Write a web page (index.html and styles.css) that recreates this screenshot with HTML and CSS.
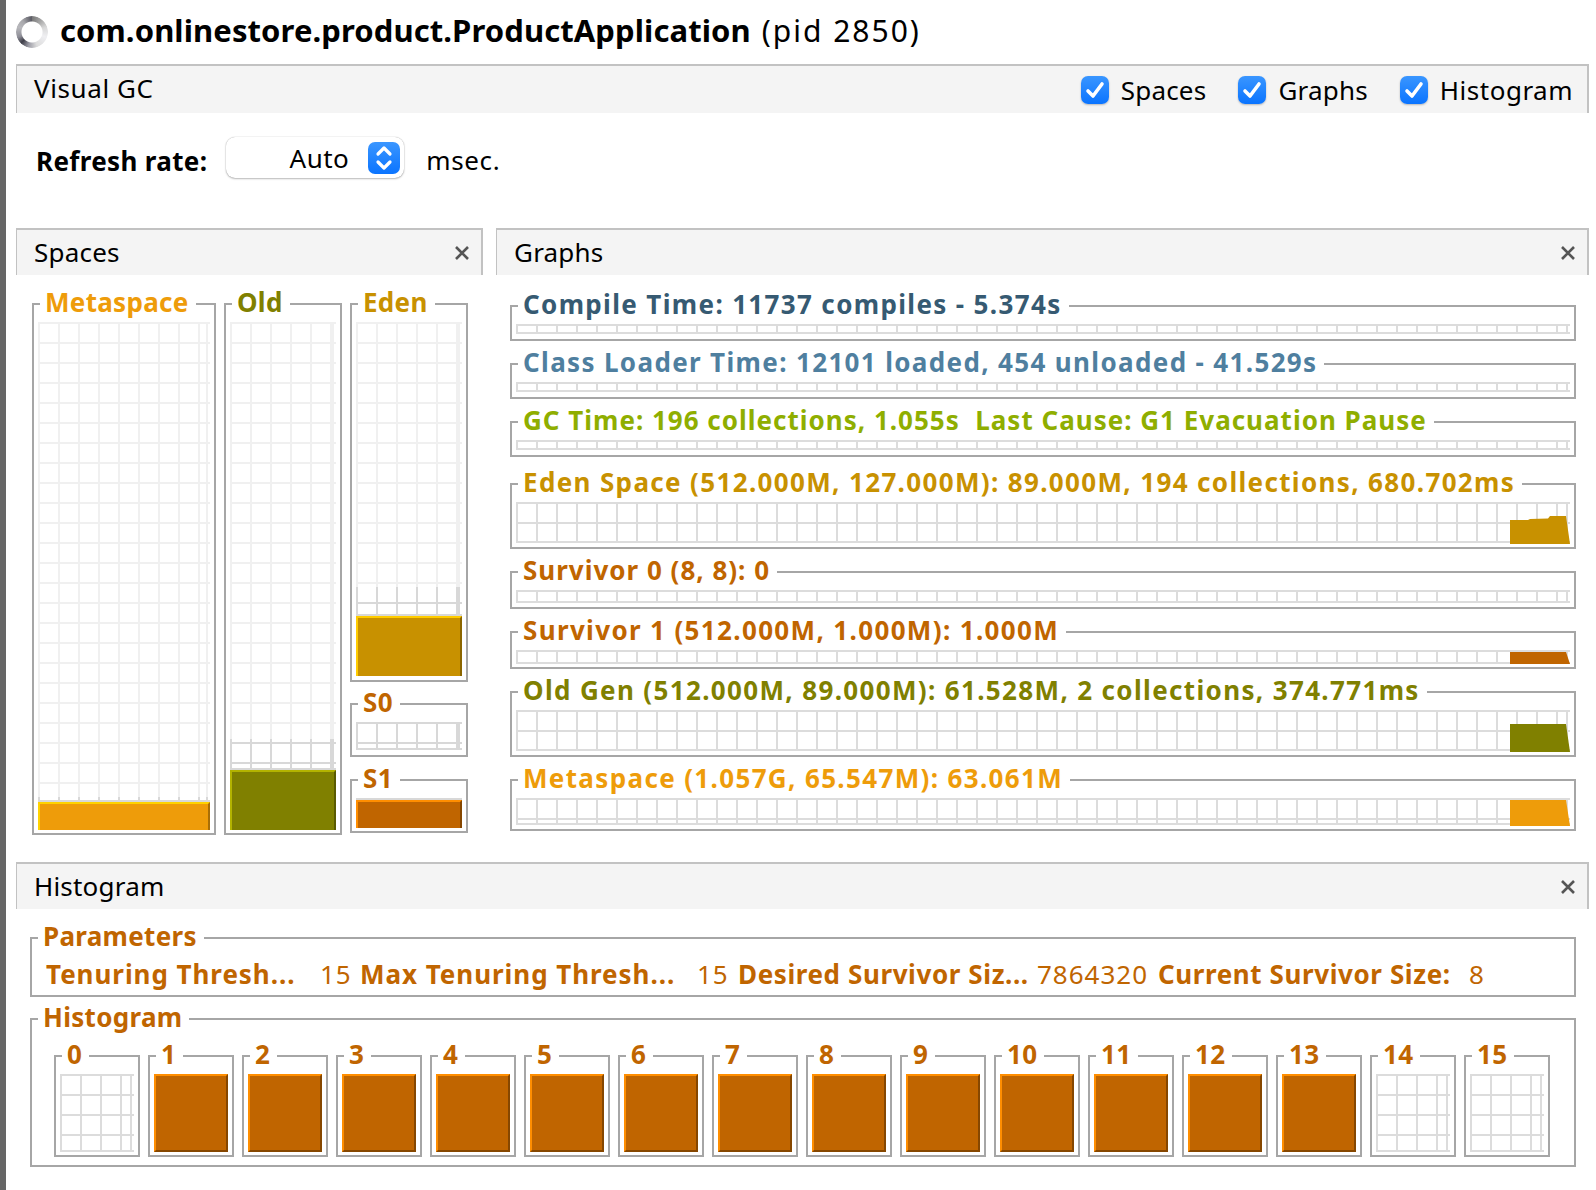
FILE: index.html
```html
<!DOCTYPE html>
<html lang="en">
<head>
    <meta charset="UTF-8">
    <title>Visual GC</title>
    <link rel="stylesheet" href="styles.css">
</head>
<body>
<div class="page">
    <div class="app-title">
        <span class="spinner"></span>
        <span class="app-name">com.onlinestore.product.ProductApplication</span>
        <span class="app-pid">(pid 2850)</span>
    </div>

    <div class="panel-head main-head">
        <span class="panel-title">Visual GC</span>
        <div class="toggles">
            <label class="toggle"><svg class="check" viewBox="0 0 28 28"><path d="M7 15l5 5 9-12" /></svg>Spaces</label>
            <label class="toggle"><svg class="check" viewBox="0 0 28 28"><path d="M7 15l5 5 9-12" /></svg>Graphs</label>
            <label class="toggle toggle-wide"><svg class="check" viewBox="0 0 28 28"><path d="M7 15l5 5 9-12" /></svg>Histogram</label>
        </div>
    </div>

    <div class="refresh">
        <b class="refresh-label">Refresh rate:</b>
        <div class="select">
            <span class="select-value">Auto</span>
            <svg class="stepper" viewBox="0 0 32 32"><path d="M10 12l6-6 6 6M10 20l6 6 6-6" /></svg>
        </div>
        <span class="refresh-unit">msec.</span>
    </div>

    <div class="middle">
        <section class="spaces">
            <div class="panel-head">
                <span class="panel-title">Spaces</span>
                <svg class="close" viewBox="0 0 14 14"><path d="M1 1l12 12M13 1L1 13" /></svg>
            </div>
            <div class="spaces-body">
                <fieldset class="box c-meta col-meta">
                    <legend>Metaspace</legend>
                    <div class="gauge gauge-full">
                        <div class="committed committed-meta"></div>
                        <div class="bar bar-meta"></div>
                    </div>
                </fieldset>
                <fieldset class="box c-old col-old">
                    <legend>Old</legend>
                    <div class="gauge gauge-full">
                        <div class="committed committed-old"></div>
                        <div class="bar bar-old"></div>
                    </div>
                </fieldset>
                <div class="col-young">
                    <fieldset class="box c-eden eden">
                        <legend>Eden</legend>
                        <div class="gauge gauge-eden">
                            <div class="committed committed-eden"></div>
                            <div class="bar bar-eden"></div>
                        </div>
                    </fieldset>
                    <fieldset class="box c-surv surv">
                        <legend>S0</legend>
                        <div class="gauge gauge-s0"></div>
                    </fieldset>
                    <fieldset class="box c-surv surv s1">
                        <legend>S1</legend>
                        <div class="gauge gauge-s1">
                            <div class="bar bar-s1"></div>
                        </div>
                    </fieldset>
                </div>
            </div>
        </section>

        <section class="graphs">
            <div class="panel-head">
                <span class="panel-title">Graphs</span>
                <svg class="close" viewBox="0 0 14 14"><path d="M1 1l12 12M13 1L1 13" /></svg>
            </div>
            <div class="graphs-body">
                <fieldset class="box c-compile row-thin">
                    <legend>Compile Time: 11737 compiles - 5.374s</legend>
                    <div class="chart chart-thin"></div>
                </fieldset>
                <fieldset class="box c-loader row-thin">
                    <legend>Class Loader Time: 12101 loaded, 454 unloaded - 41.529s</legend>
                    <div class="chart chart-thin"></div>
                </fieldset>
                <fieldset class="box c-gc row-thin loose">
                    <legend>GC Time: 196 collections, 1.055s&nbsp; Last Cause: G1 Evacuation Pause</legend>
                    <div class="chart chart-thin"></div>
                </fieldset>
                <fieldset class="box c-eden row-tall row-eden">
                    <legend>Eden Space (512.000M, 127.000M): 89.000M, 194 collections, 680.702ms</legend>
                    <div class="chart chart-tall">
                        <svg class="trace trace-eden" viewBox="0 0 60 28" preserveAspectRatio="none"><polygon points="0,4 18,4 20,3 38,2.5 40,0 56,0 60,28 0,28" /></svg>
                    </div>
                </fieldset>
                <fieldset class="box c-surv row-surv loose">
                    <legend>Survivor 0 (8, 8): 0</legend>
                    <div class="chart chart-s0"></div>
                </fieldset>
                <fieldset class="box c-surv row-surv">
                    <legend>Survivor 1 (512.000M, 1.000M): 1.000M</legend>
                    <div class="chart chart-s1">
                        <svg class="trace trace-s1" viewBox="0 0 60 12" preserveAspectRatio="none"><polygon points="0,0 56,0 60,12 0,12" /></svg>
                    </div>
                </fieldset>
                <fieldset class="box c-old row-tall">
                    <legend>Old Gen (512.000M, 89.000M): 61.528M, 2 collections, 374.771ms</legend>
                    <div class="chart chart-tall">
                        <svg class="trace trace-old" viewBox="0 0 60 28" preserveAspectRatio="none"><polygon points="0,0 56,0 60,28 0,28" /></svg>
                    </div>
                </fieldset>
                <fieldset class="box c-meta row-meta">
                    <legend>Metaspace (1.057G, 65.547M): 63.061M</legend>
                    <div class="chart chart-meta">
                        <svg class="trace trace-meta" viewBox="0 0 60 26" preserveAspectRatio="none"><polygon points="0,0 56,0 60,26 0,26" /></svg>
                    </div>
                </fieldset>
            </div>
        </section>
    </div>

    <section class="histogram">
        <div class="panel-head">
            <span class="panel-title">Histogram</span>
            <svg class="close" viewBox="0 0 14 14"><path d="M1 1l12 12M13 1L1 13" /></svg>
        </div>
        <div class="histogram-body">
            <fieldset class="box c-surv params">
                <legend>Parameters</legend>
                <div class="param-row">
                    <b class="wide">Tenuring Thresh...</b><span>15</span>
                    <b class="wide">Max Tenuring Thresh...</b><span>15</span>
                    <b>Desired Survivor Siz...</b><span>7864320</span>
                    <b>Current Survivor Size:</b><span>8</span>
                </div>
            </fieldset>
            <fieldset class="box c-surv ages">
                <legend>Histogram</legend>
                <div class="age-row">
                    <fieldset class="box c-surv age"><legend>0</legend><div class="age-grid"></div></fieldset>
                    <fieldset class="box c-surv age"><legend>1</legend><div class="age-fill"></div></fieldset>
                    <fieldset class="box c-surv age"><legend>2</legend><div class="age-fill"></div></fieldset>
                    <fieldset class="box c-surv age"><legend>3</legend><div class="age-fill"></div></fieldset>
                    <fieldset class="box c-surv age"><legend>4</legend><div class="age-fill"></div></fieldset>
                    <fieldset class="box c-surv age"><legend>5</legend><div class="age-fill"></div></fieldset>
                    <fieldset class="box c-surv age"><legend>6</legend><div class="age-fill"></div></fieldset>
                    <fieldset class="box c-surv age"><legend>7</legend><div class="age-fill"></div></fieldset>
                    <fieldset class="box c-surv age"><legend>8</legend><div class="age-fill"></div></fieldset>
                    <fieldset class="box c-surv age"><legend>9</legend><div class="age-fill"></div></fieldset>
                    <fieldset class="box c-surv age"><legend>10</legend><div class="age-fill"></div></fieldset>
                    <fieldset class="box c-surv age"><legend>11</legend><div class="age-fill"></div></fieldset>
                    <fieldset class="box c-surv age"><legend>12</legend><div class="age-fill"></div></fieldset>
                    <fieldset class="box c-surv age"><legend>13</legend><div class="age-fill"></div></fieldset>
                    <fieldset class="box c-surv age"><legend>14</legend><div class="age-grid"></div></fieldset>
                    <fieldset class="box c-surv age"><legend>15</legend><div class="age-grid"></div></fieldset>
                </div>
            </fieldset>
        </div>
    </section>
</div>
</body>
</html>
```

FILE: styles.css
```css
body {
    margin: 0;
    background: #fff;
    color: #000;
    font-family: "Noto Sans", "DejaVu Sans", sans-serif;
    font-size: 26px;
}

.page {
    height: 1190px;
    box-sizing: border-box;
    border-left: 6px solid #666;
    padding: 0 7px 0 10px;
    overflow: hidden;
}

/* title line */
.app-title {
    height: 64px;
    box-sizing: border-box;
    padding-bottom: 4px;
    display: flex;
    align-items: center;
    white-space: nowrap;
}
.spinner {
    width: 32px;
    height: 32px;
    margin: 4px 12px 0 0;
    border-radius: 50%;
    background: conic-gradient(#777 0deg, #aaa 40deg, #d8d8d8 70deg, #efeff2 110deg, #dcdcdc 160deg, #9a9aa4 195deg, #3f3f4a 225deg, #8f8f98 250deg, #b8b8bc 290deg, #a8a8ac 320deg, #5f5f68 355deg);
    -webkit-mask: radial-gradient(circle, transparent 10px, #000 11px);
    mask: radial-gradient(circle, transparent 10px, #000 11px);
    filter: blur(0.4px);
}
.app-name {
    font-size: 31px;
    font-weight: 700;
    letter-spacing: 0.09px;
}
.app-pid {
    margin-left: 11px;
    font-size: 30px;
    letter-spacing: 2px;
}

/* panel headers */
.panel-head {
    display: flex;
    align-items: center;
    justify-content: space-between;
    height: 47px;
    box-sizing: border-box;
    background: #f4f4f4;
    border-top: 2px solid #c2c2c2;
    border-left: 1px solid #c2c2c2;
    border-right: 2px solid #c2c2c2;
    padding: 0 12px 0 17px;
}
.main-head {
    height: 49px;
    padding-right: 14px;
}
.panel-title {
    margin-bottom: 2px;
    letter-spacing: 0.2px;
}
.main-head .panel-title {
    margin-bottom: 4px;
    letter-spacing: 0.6px;
}
.close {
    width: 14px;
    height: 14px;
}
.close path {
    fill: none;
    stroke: #555;
    stroke-width: 2.6;
}

.toggles {
    display: flex;
    gap: 32px;
}
.toggle {
    display: flex;
    align-items: center;
    gap: 12px;
    letter-spacing: 0.2px;
}
.toggle-wide {
    letter-spacing: 0.5px;
}
.check {
    width: 28px;
    height: 28px;
    border-radius: 7px;
    background: linear-gradient(#3a96ff, #0a74ff);
    box-shadow: 0 1px 2px rgba(0, 0, 0, 0.25);
}
.check path {
    fill: none;
    stroke: #fff;
    stroke-width: 3.6;
    stroke-linecap: round;
    stroke-linejoin: round;
}

/* refresh rate */
.refresh {
    height: 115px;
    box-sizing: border-box;
    padding: 24px 0 0 20px;
    display: flex;
    align-items: flex-start;
}
.refresh-label {
    margin: 6px 19px 0 0;
    letter-spacing: 0.35px;
}
.select {
    width: 178px;
    height: 41px;
    box-sizing: border-box;
    display: flex;
    align-items: center;
    justify-content: flex-end;
    padding-right: 4px;
    background: #fff;
    border-radius: 9px;
    box-shadow: 0 0 1px rgba(0, 0, 0, 0.35), 0 1px 2px rgba(0, 0, 0, 0.25);
}
.select-value {
    margin-right: 19px;
    letter-spacing: 0.5px;
}
.stepper {
    width: 32px;
    height: 32px;
    border-radius: 7px;
    background: linear-gradient(#3a96ff, #0a74ff);
}
.stepper path {
    fill: none;
    stroke: #fff;
    stroke-width: 3.2;
    stroke-linecap: round;
    stroke-linejoin: round;
}
.refresh-unit {
    margin: 5px 0 0 22px;
    letter-spacing: 0.6px;
}

.middle {
    display: flex;
    gap: 13px;
    height: 634px;
}
.spaces {
    width: 467px;
}
.graphs {
    flex: 1;
}

/* titled boxes */
.box {
    margin: 0;
    padding: 6px 4px 3px;
    min-width: 0;
    box-sizing: border-box;
    border: 2px solid #a6a6a6;
}
.box legend {
    margin-left: 2px;
    padding: 0 7px 0 5px;
    height: 24px;
    line-height: 20px;
    font-weight: 700;
    white-space: nowrap;
    color: var(--tone);
    letter-spacing: 0.3px;
}
.c-meta { --tone: #ee9c0a; }
.c-old { --tone: #808000; }
.c-eden { --tone: #c89100; }
.c-surv { --tone: #c06500; }
.c-compile { --tone: #365a72; }
.c-loader { --tone: #4f7f9f; }
.c-gc { --tone: #8fae00; }

/* grid lines, shared by gauges and charts */
.gauge,
.committed,
.chart,
.age-grid {
    --line: #dcdcdc;
    --grid-y: 0px;
    background-image:
        linear-gradient(to right, var(--line) 2px, transparent 2px),
        linear-gradient(to bottom, var(--line) 2px, transparent 2px),
        linear-gradient(var(--line), var(--line)),
        linear-gradient(var(--line), var(--line));
    background-size: 20px 20px, 20px 20px, 2px 100%, 100% 2px;
    background-position: 0 0, 0 var(--grid-y), right 2px top, left bottom;
    background-repeat: repeat, repeat, no-repeat, no-repeat;
}

/* spaces */
.spaces-body {
    display: flex;
    gap: 8px;
    padding: 17px 0 0 16px;
}
.col-meta {
    width: 184px;
    height: 543px;
}
.col-old {
    width: 118px;
    height: 543px;
}
.col-young {
    width: 118px;
    display: flex;
    flex-direction: column;
}
.eden {
    height: 390px;
}
.surv {
    height: 65px;
    margin-top: 10px;
}
.s1 {
    margin-top: 11px;
}
.gauge {
    --line: #f0f0f0;
    display: flex;
    flex-direction: column;
    justify-content: flex-end;
}
.gauge-full { height: 508px; }
.gauge-eden { height: 354px; }
.gauge-s0 { height: 28px; --line: #d8d8d8; }
.gauge-s1 { height: 30px; --line: #d8d8d8; }
.committed {
    --line: #d8d8d8;
    flex: none;
}
.committed-meta { height: 5px; --grid-y: 5px; }
.committed-old { height: 31px; --grid-y: 3px; }
.committed-eden { height: 29px; --grid-y: 15px; }

.bar {
    box-sizing: border-box;
    flex: none;
    border-style: solid;
    border-width: 2px 2px 0 2px;
}
.bar-meta {
    height: 28px;
    background: #ee9c0a;
    border-color: #ffd200 #a86e06 #ee9c0a #ffd200;
}
.bar-old {
    height: 60px;
    background: #808000;
    border-color: #b3b300 #5a5a00 #808000 #b3b300;
}
.bar-eden {
    height: 60px;
    background: #c89100;
    border-color: #ffcc00 #8c6600 #c89100 #ffcc00;
}
.bar-s1 {
    height: 28px;
    background: #c06500;
    border-color: #ff8e00 #864700 #c06500 #ff8e00;
}

/* graphs */
.graphs-body {
    display: flex;
    flex-direction: column;
    gap: 11px;
    padding: 19px 13px 0 14px;
}
.graphs-body legend {
    letter-spacing: 1.35px;
}
.graphs-body .loose legend {
    letter-spacing: 1px;
}
.row-thin { height: 47px; }
.row-tall { height: 77px; }
.row-eden { margin-top: 4px; }
.row-surv { height: 49px; }
.row-meta { height: 63px; }

.chart {
    display: flex;
    align-items: flex-end;
    justify-content: flex-end;
}
.chart-thin { height: 10px; }
.chart-tall { height: 41px; }
.chart-s0 { height: 13px; }
.chart-s1 { height: 14px; }
.chart-meta { height: 27px; }

.trace {
    width: 60px;
    display: block;
    margin-bottom: -1px;
}
.trace-eden { height: 28px; fill: #c89100; }
.trace-old { height: 28px; fill: #808000; }
.trace-s1 { height: 12px; fill: #c06500; margin-bottom: 0; }
.trace-meta { height: 26px; fill: #ee9c0a; }

/* histogram */
.histogram-body {
    display: flex;
    flex-direction: column;
    gap: 10px;
    padding: 17px 13px 0 14px;
}
.params {
    height: 71px;
}
.param-row {
    display: grid;
    grid-template-columns: 274px 40px 337px 41px 299px 121px 311px auto;
    padding: 0 0 0 10px;
    line-height: 36px;
    white-space: nowrap;
    color: #c06500;
    letter-spacing: 0.6px;
}
.param-row span {
    font-weight: 400;
    letter-spacing: 1px;
}
.param-row .wide {
    letter-spacing: 0.95px;
}
.ages {
    height: 160px;
}
.age-row {
    display: flex;
    gap: 8px;
    padding: 7px 0 0 18px;
}
.age {
    width: 86px;
    height: 113px;
    flex: none;
}
.age-grid {
    height: 78px;
}
.age-fill {
    height: 78px;
    box-sizing: border-box;
    background: #c06500;
    border-style: solid;
    border-width: 2px;
    border-color: #ff8e00 #864700 #864700 #ff8e00;
}
```
